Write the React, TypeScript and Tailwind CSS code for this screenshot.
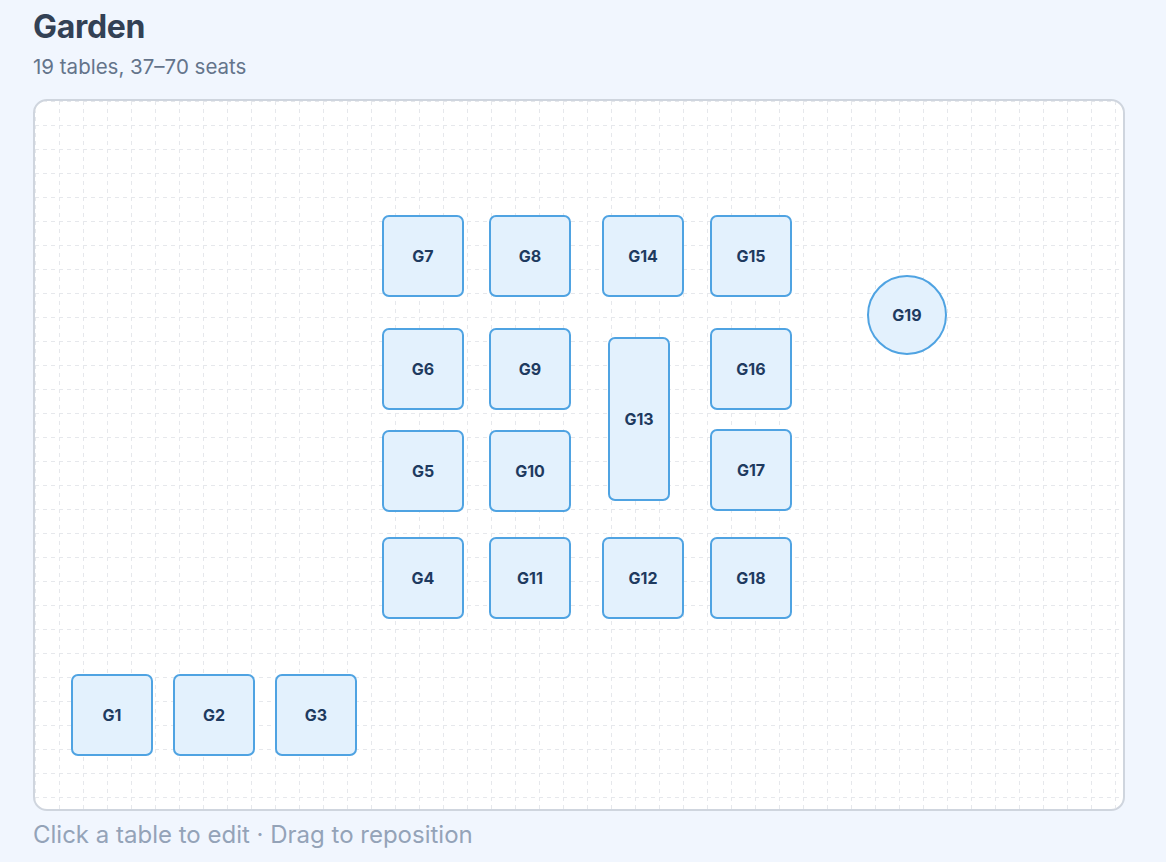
import React from 'react';

type Table = { id: string; x: number; y: number; w: number; h: number; round?: boolean };

const tables: Table[] = [
  { id: 'G1', x: 36, y: 573, w: 82, h: 82 },
  { id: 'G2', x: 138, y: 573, w: 82, h: 82 },
  { id: 'G3', x: 240, y: 573, w: 82, h: 82 },
  { id: 'G4', x: 347, y: 436, w: 82, h: 82 },
  { id: 'G5', x: 347, y: 329, w: 82, h: 82 },
  { id: 'G6', x: 347, y: 227, w: 82, h: 82 },
  { id: 'G7', x: 347, y: 114, w: 82, h: 82 },
  { id: 'G8', x: 454, y: 114, w: 82, h: 82 },
  { id: 'G9', x: 454, y: 227, w: 82, h: 82 },
  { id: 'G10', x: 454, y: 329, w: 82, h: 82 },
  { id: 'G11', x: 454, y: 436, w: 82, h: 82 },
  { id: 'G12', x: 567, y: 436, w: 82, h: 82 },
  { id: 'G13', x: 573, y: 236, w: 62, h: 164 },
  { id: 'G14', x: 567, y: 114, w: 82, h: 82 },
  { id: 'G15', x: 675, y: 114, w: 82, h: 82 },
  { id: 'G16', x: 675, y: 227, w: 82, h: 82 },
  { id: 'G17', x: 675, y: 328, w: 82, h: 82 },
  { id: 'G18', x: 675, y: 436, w: 82, h: 82 },
  { id: 'G19', x: 832, y: 174, w: 80, h: 80, round: true },
];

function GridBackdrop() {
  return (
    <svg className="absolute inset-0 h-full w-full" aria-hidden>
      <defs>
        <pattern id="floor-grid" width="24" height="24" patternUnits="userSpaceOnUse" x="0" y="0">
          <line x1="0" y1="0.5" x2="24" y2="0.5" stroke="#e6e8ec" strokeWidth="1" strokeDasharray="4 4" />
          <line x1="0.5" y1="0" x2="0.5" y2="24" stroke="#e6e8ec" strokeWidth="1" strokeDasharray="4 4" />
        </pattern>
      </defs>
      <rect width="100%" height="100%" fill="url(#floor-grid)" />
    </svg>
  );
}

export default function App() {
  return (
    <div
      className="min-h-screen w-full bg-[#f1f6fe] px-[33px] pt-[7px]"
      style={{ fontFamily: 'Inter, "Noto Sans", sans-serif' }}
    >
      <h1 className="text-[32px] font-bold leading-[40px] tracking-[-0.01em] text-[#334155]">Garden</h1>
      <p className="mt-[6px] text-[20.5px] leading-[28px] text-[#64748b]">19 tables, 37–70 seats</p>

      <div className="relative mt-[18px] h-[712px] w-[1092px] overflow-hidden rounded-[14px] border-2 border-[#cfd5de] bg-white">
        <GridBackdrop />
        {tables.map((t) => (
          <button
            key={t.id}
            className={
              'absolute flex items-center justify-center border-2 border-[#4fa3e2] bg-[#e3f1fd] text-[16px] font-bold text-[#1e3a5f] ' +
              (t.round ? 'rounded-full' : 'rounded-[7px]')
            }
            style={{ left: t.x, top: t.y, width: t.w, height: t.h }}
          >
            {t.id}
          </button>
        ))}
      </div>

      <p className="mt-[8px] text-[24px] leading-[32px] text-[#94a3b8]">Click a table to edit · Drag to reposition</p>
    </div>
  );
}
